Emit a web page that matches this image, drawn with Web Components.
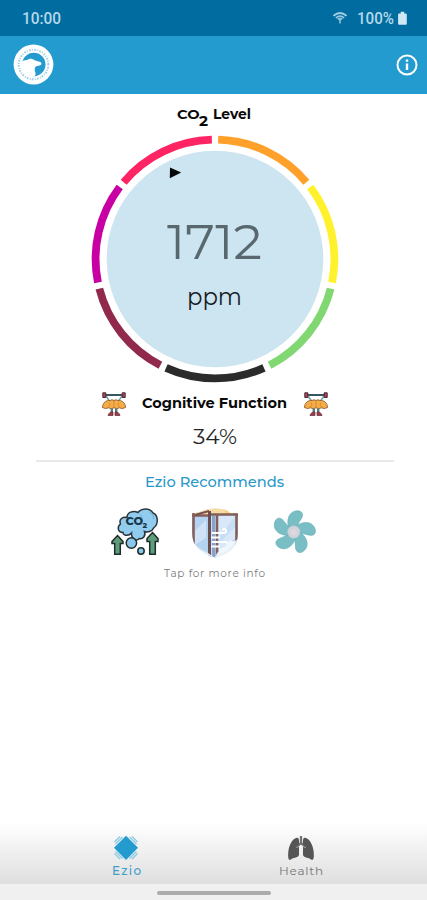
<!DOCTYPE html>
<html lang="en">
<head>
<meta charset="utf-8">
<title>Ezio</title>
<style>
html,body{margin:0;height:100%;background:#fff;overflow:hidden}
body{font-family:Montserrat,Inter,"Open Sans",sans-serif}
</style>
</head>
<body>
<ezio-app></ezio-app>
<script>
const define = (name, html) => {
  const t = document.createElement('template');
  t.innerHTML = html;
  customElements.define(name, class extends HTMLElement {
    constructor() {
      super();
      this.attachShadow({mode: 'open'}).append(t.content.cloneNode(true));
    }
  });
};

// A single line of text set to an exact width; baseline is measured from the top of the box.
customElements.define('fit-text', class extends HTMLElement {
  connectedCallback() {
    const a = n => this.getAttribute(n);
    const root = this.shadowRoot || this.attachShadow({mode: 'open'});
    root.innerHTML = `<style>:host{display:block;width:${a('w')}px;height:${a('h')}px;flex:none}
      svg{display:block;overflow:visible}text{font-size:${a('size')}px;font-weight:${a('weight') || 400};fill:currentColor}</style>
      <svg width="${a('w')}" height="${a('h')}"><text x="0" y="${a('base')}" textLength="${a('w')}" lengthAdjust="${a('adjust') || 'spacingAndGlyphs'}"></text></svg>`;
    root.querySelector('text').textContent = a('text');
  }
});

define('status-bar', `<style>
:host{display:flex;height:36px;box-sizing:border-box;padding:0 20px 0 22px;background:#006c9f;color:#b4d9ea;align-items:stretch;font-family:Roboto,sans-serif}
.sp{flex:1}svg{display:block}.wifi{margin-right:10px}</style>
<fit-text text="10:00" w="39" h="36" base="23.7" size="16" weight="500"></fit-text><span class="sp"></span>
<svg class="wifi" width="14" height="36" viewBox="333 0 14 36">
<g fill="none" stroke="#a0cde1"><path d="M333.4 15.900Q340 10.200 346.600 15.900" stroke-width="1.800"/><path d="M335.800 18Q340 14 344.200 18" stroke-width="1.600"/></g><path d="M337 18.500Q340 16.300 343 18.500L340.800 20.800v2.700h-1.600v-2.700Z" fill="#8abed7"/></svg>
<fit-text text="100%" w="37" h="36" base="24" size="16" weight="500"></fit-text>
<svg width="13" height="36"><path d="M6.700 11.800h3.500v1.600h1.600q1 0 1 1v9.400q0 1-1 1H5.100q-1 0-1-1v-9.400q0-1 1-1h1.600Z" fill="#cfe8f3"/></svg>`);

define('app-header', `<style>
:host{display:flex;height:57.5px;box-sizing:border-box;background:#239bcf;padding:0 9px 0 13px;align-items:center;justify-content:space-between}
svg{display:block}</style>
<svg width="41" height="41" viewBox="0 0 41 41"><circle cx="20.500" cy="20.500" r="19.900" fill="#fff"/>
<circle cx="20.500" cy="20.500" r="14.800" fill="none" stroke="#9fd0e7" stroke-width="2" stroke-dasharray="1 1.400 1.700 1.100"/>
<circle cx="20.800" cy="20.500" r="11.700" fill="#239bcf"/>
<path d="M9 17.500C11 15.800 13.500 16.600 15.500 15.300c1.500-.9 4.300-.4 6 1 2 .9 5 1 6.300 2 1 .9.800 2.500-.6 2.900-2.200.6-4.500.7-5 2-.6 1.700-.8 3.200 0 4.700.8 1.500.4 3-1 4.500C13 32.500 7 28 7.500 20.500Z" fill="#fff"/></svg>
<svg width="22" height="22" viewBox="0 0 22 22"><circle cx="11" cy="11" r="9.500" fill="none" stroke="#fff" stroke-width="2"/><path d="M11 5.500v2.200M11 9.500v6.400" stroke="#fff" stroke-width="2.400"/></svg>`);

define('co2-title', `<style>:host{display:flex;width:74px;height:42px;margin:0 auto;color:#090909}</style>
<fit-text text="CO" w="22.500" h="42" base="24.900" size="13" weight="700"></fit-text>
<fit-text text="2" w="9" h="42" base="31.500" size="15" weight="700"></fit-text>
<fit-text text="Level" w="38" h="42" base="24.900" size="13.500" weight="700" style="margin-left:4.500px"></fit-text>`);

customElements.define('co2-gauge', class extends HTMLElement {
  connectedCallback() {
    const root = this.shadowRoot || this.attachShadow({mode: 'open'});
    const colors = ['#ffa02b', '#fff22c', '#81d873', '#2b2b2c', '#91294c', '#c800a4', '#ff2464'];
    const pt = d => { const r = d * Math.PI / 180; return `${(124 + 119.4 * Math.sin(r)).toFixed(2)} ${(124 - 119.4 * Math.cos(r)).toFixed(2)}`; };
    const arcs = colors.map((c, i) => {
      const s = i * 360 / 7 + 1.5, e = (i + 1) * 360 / 7 - 1.5;
      return `<path d="M${pt(s)}A119.4 119.4 0 0 1 ${pt(e)}" stroke="${c}"/>`;
    }).join('');
    root.innerHTML = `<style>:host{display:grid;width:248px;height:248px;margin:0 auto}
      svg{grid-area:1/1;display:block}.v{grid-area:1/1;display:flex;flex-direction:column;align-items:center;padding-top:80px;z-index:1}</style>
      <svg width="248" height="248"><circle cx="124" cy="124" r="108.300" fill="#cde5f0"/><g fill="none" stroke-width="7.800">${arcs}</g><path d="M79 32.400L90.200 37.400 78.800 43.200Z" fill="#050809"/></svg>
      <div class="v"><fit-text text="1712" w="95" h="60" base="44.300" size="49" style="color:#59676f"></fit-text>
      <fit-text text="ppm" w="55" h="40" base="30" size="24" style="color:#182026"></fit-text></div>`;
  }
});

define('brain-icon', `<style>:host{display:block;width:26px;height:26px}svg{display:block}</style>
<svg width="26" height="26" viewBox="0 0 26 26"><path d="M4 4h18" stroke="#355665" stroke-width="2"/><path d="M5 5l3.500 5M21 5l-3.500 5" stroke="#6fa1a5" stroke-width="1.400"/>
<path d="M1.800 1.800h3v4.700h-3zM21.200 1.800h3v4.700h-3z" fill="#bc3e50" stroke="#432b39"/>
<path d="M1.500 16.500C1.500 12 5 9 9 9.500q2-1.500 4 0 2-1.500 4 0c4-.5 7.500 2.500 7.500 7q-3.500 2-6 .3-3 1.800-5.500 0-2.500 1.800-5.500 0-3 1.700-6-.3Z" fill="#f6ad47" stroke="#845122" stroke-width=".8"/>
<path d="M13 10v6M8 11.500l1 2L7.500 16M18 11.500l-1 2L18.500 16" fill="none" stroke="#c67b2c" stroke-width=".7"/>
<path d="M10.800 17.500v4.500M15.200 17.500v4.500" stroke="#547d83" stroke-width="2.400"/><path d="M12 21v3.500H7q0-2 3-3.500ZM14 21v3.500h5q0-2-3-3.500Z" fill="#a93647" stroke="#54313b" stroke-width=".7"/></svg>`);

define('cloud-icon', `<style>:host{display:block;width:50px;height:52px}svg{display:block;overflow:visible}text{font:800 10px Montserrat,Inter,sans-serif;fill:#17384a}</style>
<svg width="50" height="52" viewBox="0 0 50 52"><path d="M20.500 26C17 30 11.500 28 12 25.500 6.500 25.500 6 19.500 9.500 17 7.500 12 12 9.500 16 10.500 16 5.500 22 3 27 5.500 31 .8 39 .8 42 6 47.500 8 47.500 17.500 43 20.500 41 25 36 25.500 33.500 24.500 35 29 32 32.500 28 31.500 26 35 20 32 20.500 26Z" fill="#91cbed" stroke="#28343c" stroke-width="1.500"/>
<path d="M29 7.500c2 2 3 4.500 2 7.500M38.500 5.500c3 1 4.500 4 4 6.500" fill="none" stroke="#6fabcf"/>
<text x="14.500" y="17.500" textLength="17.500" lengthAdjust="spacingAndGlyphs">CO</text><text x="31.500" y="21" style="font-size:7.500px">2</text>
<g stroke="#202c2b" stroke-width="1.500"><path d="M6.500 28.500L12 34.500v2H9.300v10.800H3.700V36.500H1v-2ZM41.500 25.500L47 31.500v3h-2.700v12.800h-5.600V34.500H36v-3Z" fill="#5e9d79"/><circle cx="20.400" cy="36" r="5.200" fill="#89c7ec"/><circle cx="30" cy="44" r="3.200" fill="#89c7ec"/></g></svg>`);

define('window-icon', `<style>:host{display:block;width:48px;height:52px}svg{display:block}</style>
<svg width="48" height="52" viewBox="0 0 48 52"><defs><clipPath id="s"><path d="M1 5C8 5 10 3 14 2Q24-1 35 2L39 5h8V25C47 39 38 45 24 50 10 45 1 38 1 25Z"/></clipPath></defs>
<g clip-path="url(#s)"><path d="M0 0h48v52H0z" fill="#bdd9f3"/><path d="M0 0h48v10H0z" fill="#f9dca0"/><path d="M34 0h14v10H34z" fill="#f9cf7a"/><path d="M20 6h28v39H20z" fill="#c7dff6"/><path d="M29 8h15L27 31V8ZM44 19v11L30 42l-2-6Z" fill="#d8e8f9"/>
<path d="M2 7h15v37L2 36Z" fill="#b4d3f0"/><path d="M3 24l12-12v18L4 37Z" fill="#cfe2f6"/>
<path d="M2.500 5v40M1 7.500h16M18 6.500h29M26 6v42M45.500 6v35" fill="none" stroke="#85605b" stroke-width="2.600"/><path d="M4 7l14-4" stroke="#765154" stroke-width="2"/><path d="M18.500 3v46" stroke="#6b4e52" stroke-width="3"/><path d="M22.500 8v41" stroke="#86a5cc" stroke-width="3"/>
<path d="M1 33Q8 42 17 45L24 50 5 47ZM47 31Q38 38 26 45L24 50H47Z" fill="#e8f1fa"/></g>
<path d="M21 25h11q4 0 3-3-1.500-2-3.500 0M20 29.500h9M21 34h14q4 2 1 4M20 38.500h9" fill="none" stroke="#fff" stroke-width="1.900"/><path d="M28 43Q36 43 41 33" fill="none" stroke="#eff6fd" stroke-width="5"/></svg>`);

define('fan-icon', `<style>:host{display:block;width:48px;height:48px}svg{display:block;overflow:visible}</style>
<svg width="48" height="48" viewBox="0 0 48 48"><g transform="translate(23.800 24)" fill="#78bec4" stroke="#69afb8" stroke-width=".6">
<path id="b" d="M-4.500-3C-7.500-10-6-18 0-20.500 4.500-22.300 9.300-20.500 8.800-16.500 8.300-12.500 3.500-9.500 3-3Z"/>
<use href="#b" transform="rotate(72)"/><use href="#b" transform="rotate(144)"/><use href="#b" transform="rotate(216)"/><use href="#b" transform="rotate(288)"/>
<circle r="6.200" fill="#d3d4db" stroke="#b7c9d1"/><circle r="3" fill="#dcd8df" stroke="none"/></g></svg>`);

define('cognitive-panel', `<style>:host{display:block;color:#090909}
.t{display:flex;justify-content:center;align-items:flex-start;padding:8px 0 0 2px;height:34px;box-sizing:border-box}
brain-icon{margin:0 15px 0 16px}.p{display:flex;justify-content:center;color:#242424;padding-left:2px}
.l{height:2px;background:#e9e9e9;margin:10px 33px 0 36px}</style>
<div class="t"><brain-icon></brain-icon><fit-text text="Cognitive Function" w="145" h="26" base="17.300" size="14" weight="700"></fit-text><brain-icon></brain-icon></div>
<div class="p"><fit-text text="34%" w="44" h="33" base="27.300" size="20" weight="400"></fit-text></div><div class="l"></div>`);

define('recommend-panel', `<style>:host{display:block}.c{display:flex;justify-content:center;padding-left:1px}.i{display:flex;justify-content:center;height:60px;margin-top:13px;padding-left:1px}
window-icon{margin:1px 0 0 30px}fan-icon{margin:1px 0 0 31px}</style>
<div class="c" style="color:#2a98cb"><fit-text text="Ezio Recommends" w="139" h="32" base="25" size="14.500" weight="500"></fit-text></div>
<div class="i"><cloud-icon></cloud-icon><window-icon></window-icon><fan-icon></fan-icon></div>
<div class="c" style="color:#7c7c7c"><fit-text text="Tap for more info" w="101" h="16" base="9.500" size="10.500" adjust="spacing"></fit-text></div>`);

define('nav-tab', `<style>:host{display:flex;flex-direction:column;align-items:center;width:175px}</style><slot name="icon"></slot><slot></slot>`);

define('bottom-nav', `<style>:host{display:block;margin-top:auto}
.n{display:flex;justify-content:center;height:64px;box-sizing:border-box;padding-top:14px;background:linear-gradient(#fff 0,#fdfdfd 12%,#f0f0f0 48%,#dfdfdf 100%)}
.h{height:16px;background:#f0f0f0;display:flex;justify-content:center;padding-top:7px;box-sizing:border-box}.h i{display:block;width:114px;height:4px;border-radius:2px;background:#acacac}svg{display:block}</style>
<div class="n"><nav-tab style="color:#429fcb"><svg slot="icon" width="26" height="28" viewBox="0 0 26 28">
<g stroke="#8ccbe4" stroke-width="1.400"><path d="M2.500 10L9.500 3M1.500 8l5.500-5.500M16.500 3l7 7M19 2.500L24.500 8M2.500 17.500l7 7M1.500 19.500L7 25M23.500 17.500l-7 7M24.500 19.500L19 25"/></g><path d="M13 1.700L25 13.800 13 26 1 13.800Z" fill="#239bcf"/></svg>
<fit-text text="Ezio" w="29" h="20" base="12.600" size="12" weight="500" adjust="spacing"></fit-text></nav-tab>
<nav-tab style="color:#777"><svg slot="icon" width="28" height="28" viewBox="0 0 28 28"><path d="M14 2v8M14 9l-5 4M14 9l5 4" fill="none" stroke="#707070" stroke-width="2.300"/>
<path d="M9 4c2-.8 3 .5 3 2.500v4L8.800 13l1 1L12 12.500V21c-1 3-6 2.500-9 5C1 26 1 22 1.300 18 2 11 5 5.500 9 4ZM19 4c-2-.8-3 .5-3 2.500v4l3.200 2.500-1 1L16 12.500V21c1 3 6 2.500 9 5 2 0 2-4 1.700-8C26 11 23 5.500 19 4Z" fill="#555"/></svg>
<fit-text text="Health" w="44" h="20" base="12.600" size="12" adjust="spacing"></fit-text></nav-tab></div><div class="h"><i></i></div>`);

define('ezio-app', `<style>:host{display:flex;flex-direction:column;width:427px;height:900px;background:#fff;overflow:hidden}
co2-gauge{margin-top:-1px;transform:translateX(1px)}</style>
<status-bar></status-bar><app-header></app-header><co2-title></co2-title><co2-gauge></co2-gauge><cognitive-panel></cognitive-panel><recommend-panel></recommend-panel><bottom-nav></bottom-nav>`);
</script>
</body>
</html>
